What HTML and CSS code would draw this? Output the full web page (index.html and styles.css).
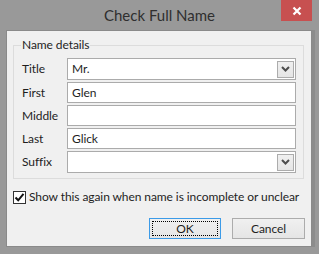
FILE: index.html
```html
<!DOCTYPE html>
<html>
<head>
<meta charset="utf-8">
<link rel="stylesheet" href="styles.css">
</head>
<body>
<div class="window">
  <div class="titlebar">
    <div class="title">Check Full Name</div>
    <div class="close">
      <svg width="10" height="10" viewBox="0 0 10 10"><path d="M1.5 1.5 L8.5 8.5 M8.5 1.5 L1.5 8.5" stroke="#fff" stroke-width="2.2" fill="none"/></svg>
    </div>
  </div>
  <div class="client">
    <fieldset class="group">
      <legend class="legend">Name details</legend>
      <div class="grid">
        <span class="lbl">Title</span>
        <div class="field combo"><span class="val">Mr.</span><span class="drop"><svg width="9" height="6" viewBox="0 0 9 6"><path d="M1 1 L4.5 4.5 L8 1" stroke="#4d4d4d" stroke-width="2" fill="none"/></svg></span></div>
        <span class="lbl">First</span>
        <div class="field"><span class="val">Glen</span></div>
        <span class="lbl">Middle</span>
        <div class="field"><span class="val"></span></div>
        <span class="lbl">Last</span>
        <div class="field"><span class="val">Glick</span></div>
        <span class="lbl">Suffix</span>
        <div class="field combo"><span class="val"></span><span class="drop"><svg width="9" height="6" viewBox="0 0 9 6"><path d="M1 1 L4.5 4.5 L8 1" stroke="#4d4d4d" stroke-width="2" fill="none"/></svg></span></div>
      </div>
    </fieldset>
    <label class="check">
      <span class="box"><svg width="11" height="11" viewBox="0 0 11 11"><path d="M1.5 5.5 L4.2 8.3 L9.5 1.8" stroke="#111" stroke-width="2" fill="none"/></svg></span>
      <span>Show this again when name is incomplete or unclear</span>
    </label>
    <div class="buttons">
      <div class="btn default"><span class="focus">OK</span></div>
      <div class="btn">Cancel</div>
    </div>
  </div>
</div>
</body>
</html>
```
FILE: styles.css
```css
* { box-sizing: border-box; }
html, body { margin: 0; padding: 0; }
body {
  width: 319px;
  height: 254px;
  background: #999999;
  font-family: Lato, "Noto Sans", sans-serif;
  font-size: 12px;
  letter-spacing: -0.08px;
  color: #1e1e1e;
  overflow: hidden;
}
.window {
  width: 319px;
  height: 254px;
  display: flex;
  flex-direction: column;
  background: #999999;
}
.titlebar {
  height: 30px;
  flex: none;
  position: relative;
  display: flex;
  justify-content: center;
  align-items: flex-start;
}
.title {
  font-size: 15px;
  letter-spacing: 0;
  color: #2f2f2f;
  line-height: 20px;
  padding-top: 5px;
}
.close {
  position: absolute;
  left: 281px;
  top: 0;
  width: 31px;
  height: 21px;
  background: #c75050;
  display: flex;
  align-items: center;
  justify-content: center;
}
.client {
  margin-left: 6px;
  width: 306px;
  height: 217px;
  flex: none;
  background: #f0f0f0;
  border: 1px solid #8a8a8a;
  box-shadow: 3px 0 0 #8c8c8c;
  padding: 0 6px 0 6px;
  display: flex;
  flex-direction: column;
}
.group {
  margin: 6px 1px 0 0;
  padding: 5px 7px 5px 8px;
  border: 1px solid #dcdcdc;
  min-width: 0;
}
.legend {
  padding: 0 1px;
  margin-left: -1px;
  line-height: 16px;
}
.grid {
  display: grid;
  grid-template-columns: 45px 229px;
  row-gap: 2px;
  align-items: center;
}
.lbl { line-height: 16px; }
.field {
  height: 21px;
  background: #fff;
  border: 1px solid #ababab;
  display: flex;
  align-items: center;
  padding-left: 4px;
}
.field.combo {
  height: 22px;
  padding-right: 1px;
}
.val { flex: 1; line-height: 16px; }
.drop {
  width: 17px;
  height: 17px;
  border: 1px solid #acacac;
  background: linear-gradient(#f0f0f0, #e5e5e5);
  display: flex;
  align-items: center;
  justify-content: center;
}
.check {
  margin-top: 10px;
  display: flex;
  align-items: center;
  gap: 3px;
  line-height: 16px;
  white-space: nowrap;
}
.box {
  width: 13px;
  height: 13px;
  flex: none;
  border: 1px solid #333;
  background: #fff;
  display: flex;
  align-items: center;
  justify-content: center;
}
.buttons {
  margin-top: 13px;
  display: flex;
  justify-content: flex-end;
  gap: 11px;
}
.btn {
  width: 73px;
  height: 21px;
  border: 1px solid #acacac;
  background: linear-gradient(#f0f0f0, #e5e5e5);
  display: flex;
  align-items: center;
  justify-content: center;
  line-height: 16px;
}
.btn.default {
  width: 72px;
  border-color: #3c9be8;
  padding: 2px;
}
.focus {
  width: 100%;
  height: 100%;
  border: 1px dotted #000;
  display: flex;
  align-items: center;
  justify-content: center;
}
```
